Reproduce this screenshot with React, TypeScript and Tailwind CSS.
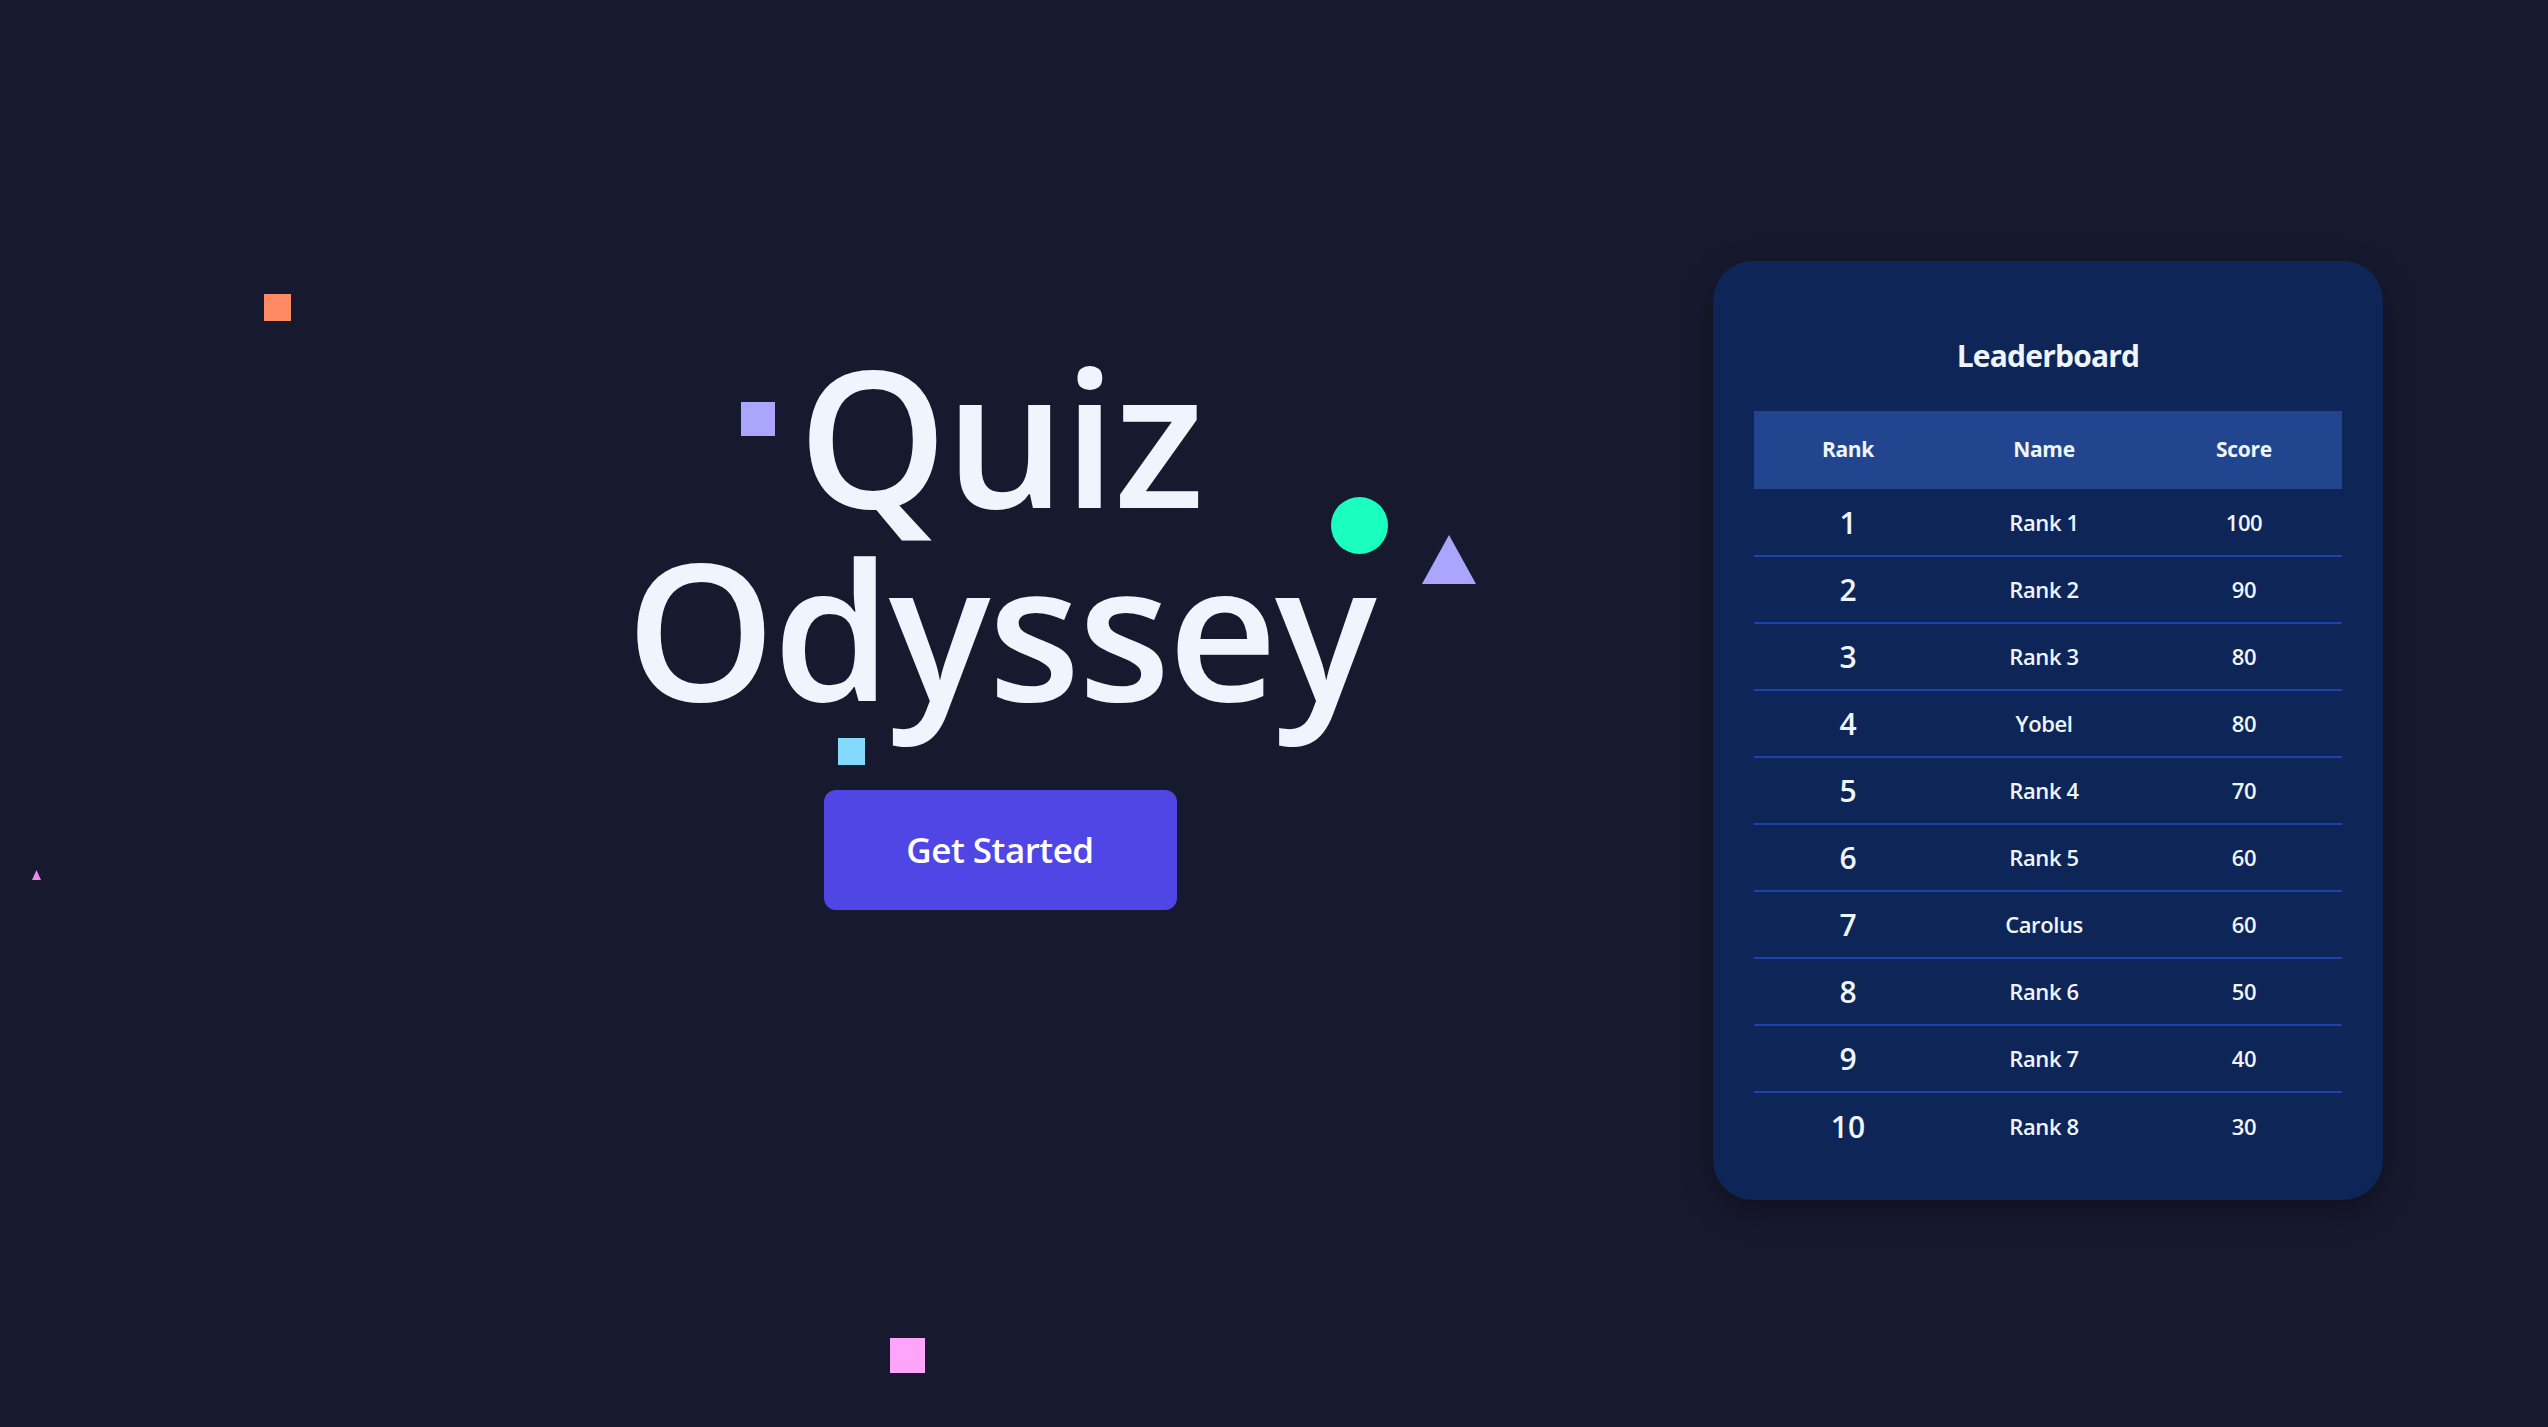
import React from "react";

const rows = [
  { rank: 1, name: "Rank 1", score: 100 },
  { rank: 2, name: "Rank 2", score: 90 },
  { rank: 3, name: "Rank 3", score: 80 },
  { rank: 4, name: "Yobel", score: 80 },
  { rank: 5, name: "Rank 4", score: 70 },
  { rank: 6, name: "Rank 5", score: 60 },
  { rank: 7, name: "Carolus", score: 60 },
  { rank: 8, name: "Rank 6", score: 50 },
  { rank: 9, name: "Rank 7", score: 40 },
  { rank: 10, name: "Rank 8", score: 30 },
];

export default function App() {
  return (
    <div
      className="relative w-full h-[1427px] overflow-hidden bg-[#171a2f] text-[#eef5fd] flex items-start pl-[287px] pr-[165px]"
      style={{ fontFamily: '"Open Sans", "Noto Sans", sans-serif' }}
    >
      {/* floating shapes */}
      <div className="absolute left-[264px] top-[294px] w-[27px] h-[27px] bg-[#fd8a63]" />
      <div className="absolute left-[741px] top-[402px] w-[34px] h-[34px] bg-[#aaa6fe]" />
      <div className="absolute left-[838px] top-[738px] w-[27px] h-[27px] bg-[#82d9fb]" />
      <div className="absolute left-[890px] top-[1338px] w-[35px] h-[35px] bg-[#ffa4fb]" />
      <div className="absolute left-[1331px] top-[497px] w-[57px] h-[57px] rounded-full bg-[#1affbf]" />
      <svg className="absolute left-[1422px] top-[535px]" width="54" height="49" viewBox="0 0 54 49">
        <polygon points="27,0 54,49 0,49" fill="#aaa6fd" />
      </svg>
      <svg className="absolute left-[32px] top-[870px]" width="9" height="10" viewBox="0 0 9 10">
        <polygon points="4.5,0 9,10 0,10" fill="#e48cf0" />
      </svg>

      {/* left hero */}
      <div className="flex-1 flex flex-col items-center pt-[338px]">
        <h1 className="text-center font-semibold text-[190px] leading-[193px] tracking-[-2.5px]">
          <span className="block">Quiz</span>
          <span className="block">Odyssey</span>
        </h1>
        <button className="mt-[66px] w-[353px] h-[120px] rounded-[12px] bg-[#4f46e5] text-white text-[35px] font-semibold tracking-[-0.5px]">
          Get Started
        </button>
      </div>

      {/* leaderboard card */}
      <div className="mt-[261px] w-[670px] rounded-[40px] bg-[#0e2557] px-[41px] pt-[40px] pb-[41px] shadow-[0_10px_30px_rgba(0,0,0,0.35)]">
        <h2 className="text-center text-[30px] font-bold leading-[110px] tracking-[-0.8px]">
          Leaderboard
        </h2>
        <table className="w-full table-fixed border-collapse">
          <colgroup>
            <col className="w-[188px]" />
            <col className="w-[204px]" />
            <col />
          </colgroup>
          <thead>
            <tr className="bg-[#21468f] h-[78px]">
              <th className="text-[21px] font-bold tracking-[-0.3px]">Rank</th>
              <th className="text-[21px] font-bold tracking-[-0.3px]">Name</th>
              <th className="text-[21px] font-bold tracking-[-0.3px]">Score</th>
            </tr>
          </thead>
          <tbody>
            {rows.map((r, i) => (
              <tr
                key={r.rank}
                className={
                  i < rows.length - 1
                    ? "h-[67px] border-b-2 border-[#1e3fae]"
                    : "h-[67px]"
                }
              >
                <td className="text-center text-[30px] font-semibold">{r.rank}</td>
                <td className="text-center text-[22px] font-semibold tracking-[-0.4px]">{r.name}</td>
                <td className="text-center text-[22px] font-semibold tracking-[-0.4px]">{r.score}</td>
              </tr>
            ))}
          </tbody>
        </table>
      </div>
    </div>
  );
}
